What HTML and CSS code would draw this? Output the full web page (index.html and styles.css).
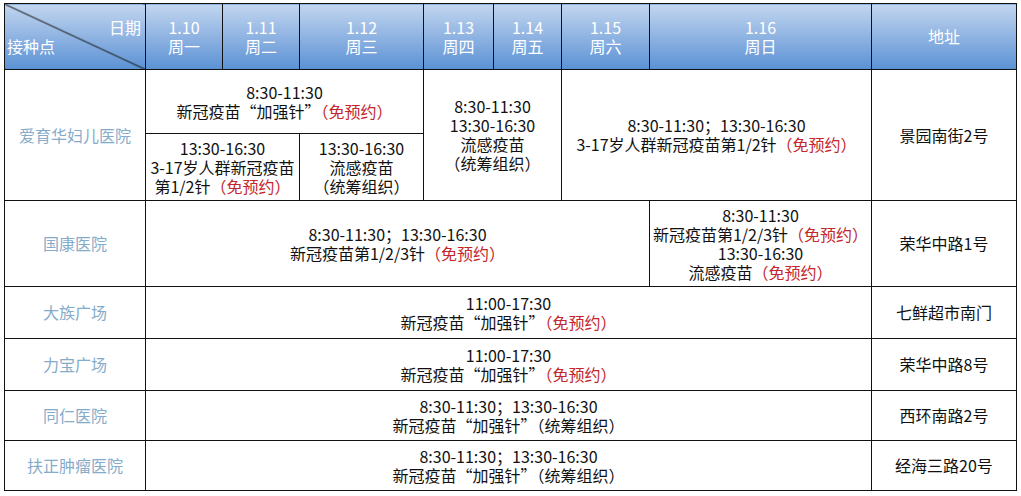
FILE: index.html
```html
<!DOCTYPE html>
<html lang="zh">
<head>
<meta charset="utf-8">
<title>疫苗接种安排</title>
<link rel="stylesheet" href="styles.css">
</head>
<body>
<table class="sched">
  <colgroup>
    <col class="c-name">
    <col class="c-d1">
    <col class="c-d2">
    <col class="c-d3">
    <col class="c-d4">
    <col class="c-d5">
    <col class="c-d6">
    <col class="c-d7">
    <col class="c-addr">
  </colgroup>
  <thead>
    <tr class="r-head">
      <th class="corner"><div class="corner-top">日期</div><div class="corner-bot">接种点</div></th>
      <th>1.10<br>周一</th>
      <th>1.11<br>周二</th>
      <th>1.12<br>周三</th>
      <th>1.13<br>周四</th>
      <th>1.14<br>周五</th>
      <th>1.15<br>周六</th>
      <th>1.16<br>周日</th>
      <th>地址</th>
    </tr>
  </thead>
  <tbody>
    <tr class="r-1a">
      <td class="name" rowspan="2">爱育华妇儿医院</td>
      <td colspan="3">8:30-11:30<br>新冠疫苗“加强针”<span class="red">（免预约）</span></td>
      <td colspan="2" rowspan="2">8:30-11:30<br>13:30-16:30<br>流感疫苗<br>（统筹组织）</td>
      <td colspan="2" rowspan="2">8:30-11:30；13:30-16:30<br>3-17岁人群新冠疫苗第1/2针<span class="red">（免预约）</span></td>
      <td class="addr" rowspan="2">景园南街2号</td>
    </tr>
    <tr class="r-1b">
      <td colspan="2">13:30-16:30<br>3-17岁人群新冠疫苗<br>第1/2针<span class="red">（免预约）</span></td>
      <td>13:30-16:30<br>流感疫苗<br>（统筹组织）</td>
    </tr>
    <tr class="r-2">
      <td class="name">国康医院</td>
      <td colspan="6">8:30-11:30；13:30-16:30<br>新冠疫苗第1/2/3针<span class="red">（免预约）</span></td>
      <td>8:30-11:30<br>新冠疫苗第1/2/3针<span class="red">（免预约）</span><br>13:30-16:30<br>流感疫苗<span class="red">（免预约）</span></td>
      <td class="addr">荣华中路1号</td>
    </tr>
    <tr class="r-3">
      <td class="name">大族广场</td>
      <td colspan="7">11:00-17:30<br>新冠疫苗“加强针”<span class="red">（免预约）</span></td>
      <td class="addr">七鲜超市南门</td>
    </tr>
    <tr class="r-3">
      <td class="name">力宝广场</td>
      <td colspan="7">11:00-17:30<br>新冠疫苗“加强针”<span class="red">（免预约）</span></td>
      <td class="addr">荣华中路8号</td>
    </tr>
    <tr class="r-5">
      <td class="name">同仁医院</td>
      <td colspan="7">8:30-11:30；13:30-16:30<br>新冠疫苗“加强针”（统筹组织）</td>
      <td class="addr">西环南路2号</td>
    </tr>
    <tr class="r-5">
      <td class="name">扶正肿瘤医院</td>
      <td colspan="7">8:30-11:30；13:30-16:30<br>新冠疫苗“加强针”（统筹组织）</td>
      <td class="addr">经海三路20号</td>
    </tr>
  </tbody>
</table>
</body>
</html>
```

FILE: styles.css
```css
html, body {
  margin: 0;
  padding: 0;
  background: #ffffff;
}
body {
  padding: 3px 4px;
  font-family: "Noto Sans CJK SC", "Noto Sans", sans-serif;
  font-size: 16px;
  color: #111;
}
.sched {
  border-collapse: collapse;
  table-layout: fixed;
  width: 1012px;
}
.c-name { width: 141px; }
.c-d1 { width: 77px; }
.c-d2 { width: 77px; }
.c-d3 { width: 124px; }
.c-d4 { width: 70px; }
.c-d5 { width: 68px; }
.c-d6 { width: 88px; }
.c-d7 { width: 222px; }
.c-addr { width: 145px; }

.sched th, .sched td {
  border: 1px solid #111;
  padding: 0;
  text-align: center;
  vertical-align: middle;
  line-height: 19px;
  font-weight: normal;
  white-space: nowrap;
}
.sched th {
  color: #ffffff;
  background: linear-gradient(to bottom, #c2d6ef 0%, #8fb3e2 50%, #5a92d4 100%);
}
.r-head { height: 66px; }
.r-1a { height: 64px; }
.r-1b { height: 67px; }
.r-2 { height: 86px; }
.r-3 { height: 52px; }
.r-5 { height: 50px; }

.sched th.corner {
  background:
    linear-gradient(to top right, transparent calc(50% - 1px), #1a1a1a 50%, transparent calc(50% + 1px)),
    linear-gradient(to bottom, #c2d6ef 0%, #8fb3e2 50%, #5a92d4 100%);
  padding: 0 2px 0 2px;
}
.corner-top {
  text-align: right;
  padding-right: 2px;
}
.corner-bot {
  text-align: left;
}
.name {
  color: #86abc9;
}
.addr {
  color: #111;
}
.red {
  color: #c4262b;
}
```
